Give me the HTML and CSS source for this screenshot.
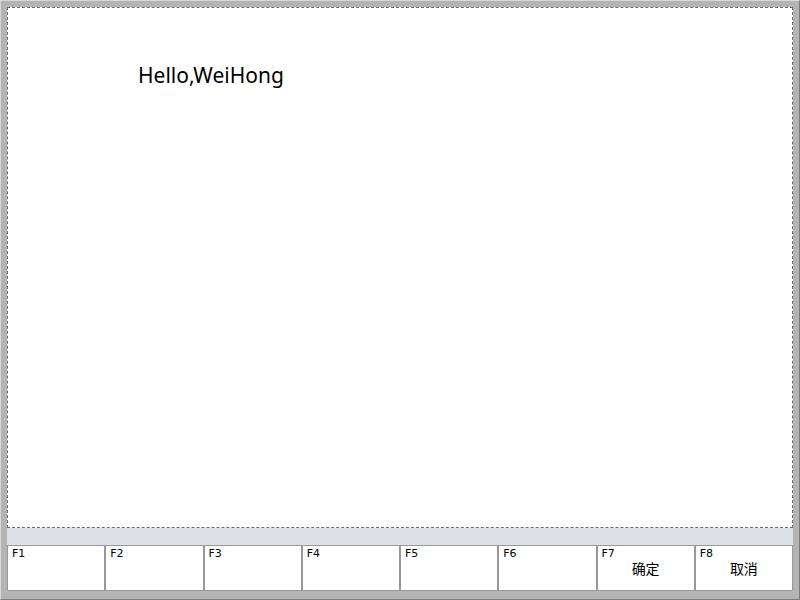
FILE: index.html
```html
<!DOCTYPE html>
<html>
<head>
<meta charset="utf-8">
<link rel="stylesheet" href="styles.css">
</head>
<body>
<div class="frame">
  <div class="inner">
    <div class="canvas">
      <div class="greeting">Hello,WeiHong</div>
    </div>
    <div class="band"></div>
    <div class="keys">
      <div class="key"><span class="fn">F1</span></div>
      <div class="key"><span class="fn">F2</span></div>
      <div class="key"><span class="fn">F3</span></div>
      <div class="key"><span class="fn">F4</span></div>
      <div class="key"><span class="fn">F5</span></div>
      <div class="key"><span class="fn">F6</span></div>
      <div class="key"><span class="fn">F7</span><span class="label">确定</span></div>
      <div class="key"><span class="fn">F8</span><span class="label">取消</span></div>
    </div>
  </div>
</div>
</body>
</html>
```

FILE: styles.css
```css
html, body {
  margin: 0;
  padding: 0;
}
body {
  width: 800px;
  height: 600px;
  overflow: hidden;
  font-family: "Noto Sans", "Noto Sans CJK SC", sans-serif;
}
.frame {
  box-sizing: border-box;
  width: 800px;
  height: 600px;
  background: #b4b4b4;
  border-top: 1px solid #d8d8d8;
  border-left: 1px solid #d8d8d8;
  border-right: 1px solid #7c7c7c;
  border-bottom: 1px solid #7c7c7c;
  padding: 6px 6px 8px 6px;
}
.inner {
  height: 100%;
  display: flex;
  flex-direction: column;
}
.canvas {
  box-sizing: border-box;
  height: 521px;
  background: #fff;
  border: 1px dashed #6a6a6a;
  padding: 54px 0 0 130px;
}
.greeting {
  font-family: "Noto Sans", sans-serif;
  font-size: 21px;
  line-height: 26px;
  color: #000;
}
.band {
  height: 17px;
  background: #dde0e4;
}
.keys {
  flex: 1;
  display: flex;
  background: #fff;
}
.key {
  flex: 1;
  box-sizing: border-box;
  border: 1px solid #999;
  border-right-width: 0;
  display: flex;
  flex-direction: column;
  align-items: center;
  padding: 1px 0 0 0;
}
.key:last-child {
  border-right-width: 1px;
}
.key + .key {
  border-left-width: 2px;
}
.fn {
  align-self: flex-start;
  margin-left: 4px;
  font-family: "DejaVu Sans", sans-serif;
  font-size: 11px;
  line-height: 14px;
  color: #000;
}
.label {
  font-family: "Noto Sans CJK SC", sans-serif;
  font-size: 14px;
  line-height: 16px;
  color: #000;
  margin-top: -1px;
}
```
